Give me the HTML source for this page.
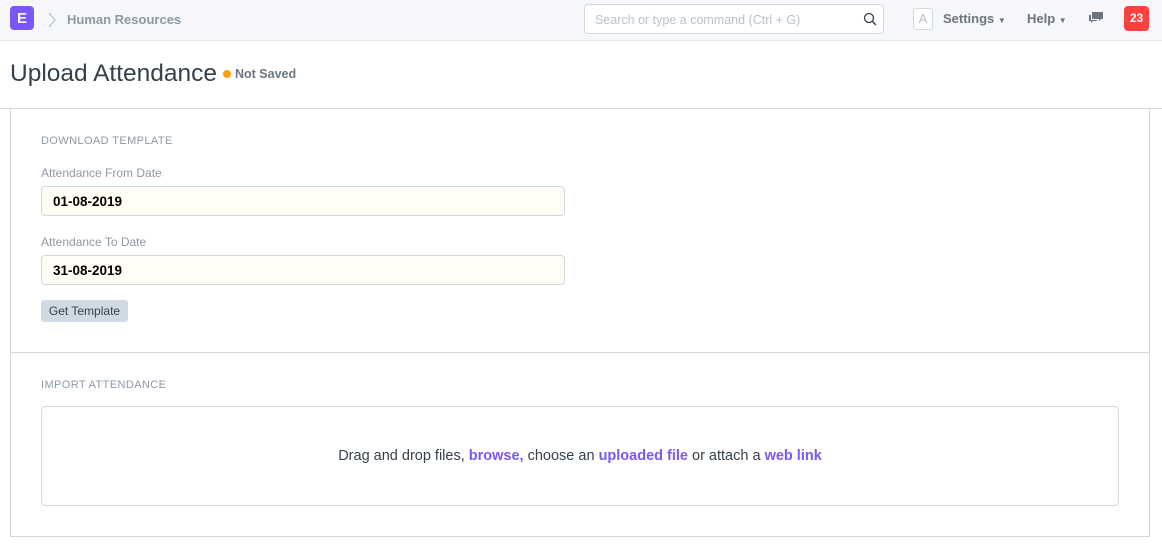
<!DOCTYPE html>
<html><head><style>
*{box-sizing:border-box;margin:0;padding:0}
body{width:1162px;height:545px;background:#fff;font-family:"Liberation Sans",sans-serif;position:relative;overflow:hidden;color:#36414c}
.nav{position:absolute;left:0;top:0;width:1162px;height:41px;background:#f5f7fa;border-bottom:1px solid #e6e9ed}
.logo{position:absolute;left:10px;top:6px;width:24px;height:24px;background:#7b57f5;border-radius:4px;color:#fff;font-weight:bold;font-size:15px;text-align:center;line-height:25px}
.abs{position:absolute;white-space:nowrap}
.search{position:absolute;left:584px;top:4px;width:300px;height:30px;border:1px solid #d1d8dd;border-radius:4px;background:#fff;font-size:12.5px;color:#b8c2cc;padding:8px 10px}
.nt{font-size:13px;font-weight:bold;color:#6c7680}
.lbl{font-size:12px;color:#8d99a6}
.inp{position:absolute;left:41px;width:524px;height:30px;border:1px solid #d1d8dd;border-radius:4px;background:#fffdf4;font-size:13.5px;font-weight:bold;color:#000;padding:7px 11px}
</style></head><body>
<div class="nav">
<div class="logo">E</div>
<svg class="abs" style="left:47px;top:12px" width="10" height="16"><path d="M2 1l6 7-6 7" stroke="#b8c2cc" stroke-width="1.3" fill="none"/></svg>
<div class="abs nt" style="left:67px;top:12px;color:#8d99a6">Human Resources</div>
<div class="search">Search or type a command (Ctrl + G)</div>
<svg class="abs" style="left:863px;top:12px" width="14" height="14"><circle cx="6" cy="6" r="4.5" stroke="#36414c" stroke-width="1.3" fill="none"/><path d="M9.5 9.5l3.5 3.5" stroke="#36414c" stroke-width="1.4"/></svg>
<div class="abs" style="left:913px;top:8px;width:20px;height:22px;border:1px solid #d1d8dd;border-radius:3px;background:#fff;color:#b8c2cc;font-size:13px;text-align:center;line-height:20px">A</div>
<div class="abs nt" style="left:943px;top:11px">Settings <span style="font-size:8px">▼</span></div>
<div class="abs nt" style="left:1027px;top:11px">Help <span style="font-size:8px">▼</span></div>
<svg class="abs" style="left:1088px;top:11px" width="16" height="14"><path d="M4 1h11v7h-2l-2 2V8H4z" fill="#6c7680"/><path d="M1 4h2v5h6v1H5l-2 2v-2H1z" fill="#6c7680"/></svg>
<div class="abs" style="left:1124px;top:6px;width:25px;height:25px;background:#ff4040;border-radius:4px;color:#fff;font-size:12px;font-weight:bold;text-align:center;line-height:25px">23</div>
</div>
<div class="abs" style="left:10px;top:60px;font-size:24.5px;color:#36414c">Upload Attendance</div>
<div class="abs" style="left:223px;top:70px;width:8px;height:8px;border-radius:50%;background:#ffa00a"></div>
<div class="abs nt" style="left:235px;top:67px;font-size:12.5px">Not Saved</div>
<div class="abs" style="left:0;top:108px;width:1162px;border-top:1px solid #d1d8dd"></div>
<div class="abs" style="left:10px;top:109px;width:1140px;height:428px;border:1px solid #d1d8dd;border-top:none"></div>
<div class="abs lbl" style="left:41px;top:135px;font-size:11px;letter-spacing:.4px">DOWNLOAD TEMPLATE</div>
<div class="abs lbl" style="left:41px;top:166px">Attendance From Date</div>
<div class="inp" style="top:186px">01-08-2019</div>
<div class="abs lbl" style="left:41px;top:235px">Attendance To Date</div>
<div class="inp" style="top:255px">31-08-2019</div>
<div class="abs" style="left:41px;top:300px;width:87px;height:22px;background:#cfdae4;border-radius:3px;font-size:12px;color:#36414c;text-align:center;line-height:22px">Get Template</div>
<div class="abs" style="left:10px;top:352px;width:1140px;border-top:1px solid #d1d8dd"></div>
<div class="abs lbl" style="left:41px;top:379px;font-size:11px;letter-spacing:.4px">IMPORT ATTENDANCE</div>
<div class="abs" style="left:41px;top:406px;width:1078px;height:100px;border:1px solid #d1d8dd;border-radius:4px;text-align:center;font-size:14.5px;line-height:98px;color:#36414c">Drag and drop files, <b style="color:#7b57f5">browse,</b> choose an <b style="color:#7b57f5">uploaded file</b> or attach a <b style="color:#7b57f5">web link</b></div>
</body></html>
